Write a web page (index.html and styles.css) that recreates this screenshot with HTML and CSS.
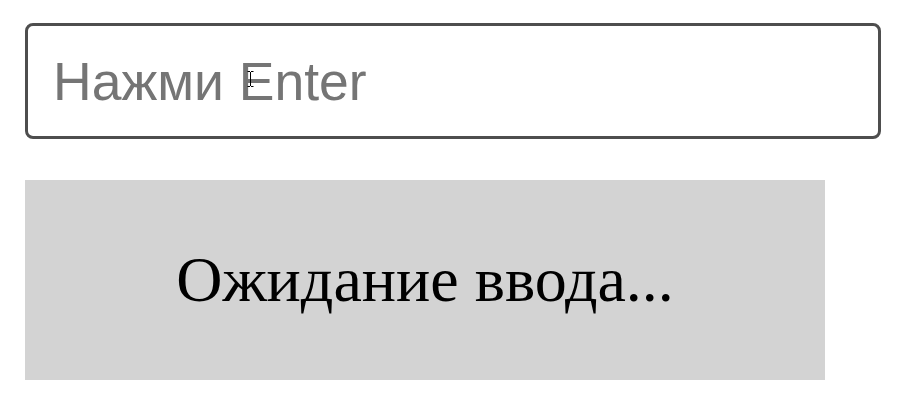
FILE: index.html
```
<!DOCTYPE html>
<html lang="ru">
<head>
<meta charset="utf-8">
<title>Ввод</title>
<link rel="stylesheet" href="styles.css">
</head>
<body>
<main class="page">
  <div class="field">
    <input class="entry" type="text" placeholder="Нажми Enter">
    <svg class="ibeam" width="7" height="16" viewBox="0 0 7 16" aria-hidden="true">
      <path d="M0.5 0.5h2.5M4 0.5h2.5M3.5 1v14M0.5 15.5h2.5M4 15.5h2.5" stroke="#000" stroke-width="1" fill="none"/>
    </svg>
  </div>
  <div class="status">Ожидание ввода...</div>
</main>
</body>
</html>
```
FILE: styles.css
```
html, body {
  margin: 0;
  background: #fff;
}

.page {
  padding: 23px 0 0 25px;
  display: flex;
  flex-direction: column;
  gap: 41px;
  align-items: flex-start;
}

.field {
  position: relative;
}

.entry {
  box-sizing: border-box;
  width: 856px;
  height: 116px;
  border: 3px solid #4e4e4e;
  border-radius: 8px;
  padding: 0 24px 0 25px;
  font-family: "Liberation Sans", Arial, sans-serif;
  font-size: 53.5px;
  color: #000;
  background: #fff;
  outline: none;
}

.entry::placeholder {
  color: #757575;
}

.ibeam {
  position: absolute;
  left: 222px;
  top: 48px;
}

.status {
  width: 800px;
  height: 200px;
  background: #d3d3d3;
  display: flex;
  align-items: center;
  justify-content: center;
  font-family: "Liberation Serif", "Times New Roman", serif;
  font-size: 64px;
  color: #000;
}
```
